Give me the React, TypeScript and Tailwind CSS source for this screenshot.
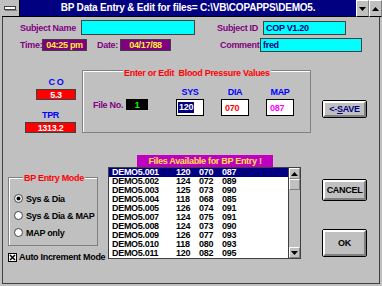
import React from 'react';

const rows = [
  ['DEMO5.001', '120', '070', '087'],
  ['DEMO5.002', '124', '072', '089'],
  ['DEMO5.003', '125', '073', '090'],
  ['DEMO5.004', '118', '068', '085'],
  ['DEMO5.005', '126', '074', '091'],
  ['DEMO5.007', '124', '075', '091'],
  ['DEMO5.008', '124', '073', '090'],
  ['DEMO5.009', '126', '077', '093'],
  ['DEMO5.010', '118', '080', '093'],
  ['DEMO5.011', '120', '082', '095'],
];

const Button = ({ className = '', children }: { className?: string; children?: React.ReactNode }) => (
  <div className={`rounded-[2px] border border-black bg-[#c0c0c0] ${className}`}>
    <div className="flex h-full w-full items-center justify-center border-2 border-t-white border-l-white border-r-[#808080] border-b-[#808080]">
      {children}
    </div>
  </div>
);

const Arrow = ({ up }: { up?: boolean }) => (
  <svg width="7" height="4" viewBox="0 0 7 4">
    <polygon points={up ? '3.5,0 7,4 0,4' : '0,0 7,0 3.5,4'} fill="#000" />
  </svg>
);

const ScrollBtn = ({ up, blank, className = '' }: { up?: boolean; blank?: boolean; className?: string }) => (
  <div className={`flex items-center justify-center border border-t-white border-l-white border-r-[#808080] border-b-[#808080] bg-[#c0c0c0] ${className}`}>
    {!blank && <Arrow up={up} />}
  </div>
);

const Radio = ({ on }: { on?: boolean }) => (
  <svg width="9" height="9" viewBox="0 0 9 9">
    <circle cx="4.5" cy="4.5" r="4" fill="#fff" stroke="#404040" />
    {on && <circle cx="4.5" cy="4.5" r="2" fill="#000" />}
  </svg>
);

const App = () => {
  return (
    <div className="flex h-[286px] w-[382px] flex-col overflow-hidden bg-[#c0c0c0] font-['Liberation_Sans',Arial,sans-serif] text-[9px] font-bold leading-[10px] tracking-[-0.3px]">
      {/* title bar */}
      <div className="flex h-[17px] shrink-0 pl-[2px]">
        <div className="flex h-[17px] w-[18px] items-center justify-center border-r border-b border-black bg-[#c0c0c0]">
          <svg width="13" height="5" viewBox="0 0 13 5">
            <rect x="0.5" y="0.5" width="11" height="3" fill="#fff" stroke="#404040" />
            <line x1="1" y1="4.5" x2="13" y2="4.5" stroke="#808080" />
          </svg>
        </div>
        <div className="flex flex-1 items-center justify-center border-b border-black bg-[#000080] text-[10px] tracking-[-0.2px] text-white">
          {'BP Data Entry & Edit for files= C:\\VB\\COPAPPS\\DEMO5.'}
        </div>
        <ScrollBtn className="h-[17px] w-[13px] border-b-black" />
        <ScrollBtn up className="h-[17px] w-[13px] border-b-black" />
      </div>

      {/* client */}
      <div className="mx-[2px] mb-[2px] flex flex-1 flex-col border-x border-b border-[#404040]">
        <div className="mt-[3px] flex h-[15px] items-center">
          <span className="ml-[17px] w-[61px] whitespace-nowrap text-[#800080]">Subject Name</span>
          <div className="h-[15px] w-[114px] border border-[#404040] bg-[#00ffff]" />
          <span className="ml-[22px] w-[46px] whitespace-nowrap text-[#800080]">Subject ID</span>
          <div className="h-[14px] w-[83px] border border-[#404040] bg-[#00ffff] pl-[2px] leading-[12px] text-[#000080]">COP V1.20</div>
        </div>

        <div className="mt-[3px] flex h-[14px] items-center">
          <span className="ml-[17px] w-[22px] text-[#800080]">Time:</span>
          <div className="flex h-[12px] w-[45px] items-center justify-center border border-[#404040] bg-[#800080] text-[#ffee30]">04:25 pm</div>
          <span className="ml-[10px] w-[23px] text-[#800080]">Date:</span>
          <div className="flex h-[12px] w-[51px] items-center justify-center border border-[#404040] bg-[#800080] text-[#ffee30]">04/17/88</div>
          <span className="ml-[49px] w-[40px] text-[#800080]">Comment</span>
          <div className="h-[14px] w-[102px] border border-[#404040] bg-[#00ffff] pl-[2px] leading-[12px] text-[#000080]">fred</div>
        </div>

        {/* pressure values */}
        <div className="mt-[18px] flex h-[64px] items-start">
          <div className="flex w-[73px] flex-col items-end">
            <div className="mt-[7px] flex flex-col items-center">
              <span className="text-[#0000ff]">C O</span>
              <div className="mt-[2px] flex h-[11px] w-[40px] items-center justify-center border border-[#404040] bg-[#ff0000] text-white">5.3</div>
            </div>
            <div className="mt-[10px] flex flex-col items-center">
              <span className="text-[#0000ff]">TPR</span>
              <div className="mt-[2px] flex h-[11px] w-[51px] items-center justify-center border border-[#404040] bg-[#ff0000] text-white">1313.2</div>
            </div>
          </div>

          <div className="relative ml-[6px] flex h-[63px] w-[229px] items-start border border-[#808080] shadow-[inset_1px_1px_0_#fff] pt-[16px]">
            <span className="absolute top-[-3px] left-[40px] bg-[#c0c0c0] px-[1px] whitespace-nowrap text-[#ff0000]">Enter or Edit&nbsp; Blood Pressure Values</span>
            <div className="mt-[12px] ml-[10px] flex h-[11px] items-center">
              <span className="w-[33px] whitespace-nowrap text-[#800080]">File No.</span>
              <div className="flex h-[11px] w-[22px] items-center justify-center bg-black text-[#00ff00]">1</div>
            </div>
            <div className="ml-[28px] flex flex-col items-center">
              <span className="text-[#0000ff]">SYS</span>
              <div className="mt-[2px] flex h-[17px] w-[28px] items-center border border-black bg-white pl-[1px]">
                <span className="bg-[#000080] px-[1px] leading-[11px] text-white">120</span>
              </div>
            </div>
            <div className="ml-[17px] flex flex-col items-center">
              <span className="text-[#0000ff]">DIA</span>
              <div className="mt-[2px] flex h-[17px] w-[28px] items-center border border-black bg-white pl-[3px] text-[#ff0000]">070</div>
            </div>
            <div className="ml-[17px] flex flex-col items-center">
              <span className="text-[#0000ff]">MAP</span>
              <div className="mt-[2px] flex h-[17px] w-[28px] items-center border border-black bg-white pl-[3px] text-[#ff00ff]">087</div>
            </div>
          </div>

          <Button className="mt-[30px] ml-[11px] h-[18px] w-[45px]">
            <span className="text-[#000080]">
              &lt;-<span className="underline">S</span>AVE
            </span>
          </Button>
        </div>

        {/* bottom section */}
        <div className="mt-[21px] flex items-start">
          <div className="ml-[5px] flex w-[100px] flex-col">
            <div className="relative mt-[22px] flex h-[69px] w-[90px] flex-col border border-[#808080] shadow-[inset_1px_1px_0_#fff] pt-[12px]">
              <span className="absolute top-[-5px] left-[14px] bg-[#c0c0c0] px-[1px] whitespace-nowrap text-[#ff0000]">BP Entry Mode</span>
              {[
                ['Sys & Dia', true],
                ['Sys & Dia & MAP', false],
                ['MAP only', false],
              ].map(([label, on]) => (
                <div key={label as string} className="flex h-[17px] items-center pl-[5px]">
                  <Radio on={on as boolean} />
                  <span className="ml-[3px] whitespace-nowrap text-black">{label as string}</span>
                </div>
              ))}
            </div>
            <div className="mt-[6px] flex h-[10px] items-center">
              <svg width="9" height="9" viewBox="0 0 9 9">
                <rect x="0.5" y="0.5" width="8" height="8" fill="#fff" stroke="#000" />
                <path d="M2 2 L7 7 M7 2 L2 7" stroke="#000" strokeWidth="1.5" />
              </svg>
              <span className="ml-[2px] whitespace-nowrap text-black">Auto Increment Mode</span>
            </div>
          </div>

          <div className="flex flex-col">
            <div className="ml-[29px] flex h-[12px] w-[136px] items-center justify-center bg-[#c000c0] text-[#ffe040]">
              Files Available for BP Entry !
            </div>
            <div className="flex h-[92px] w-[193px] border border-[#404040] bg-white">
              <div className="flex flex-1 flex-col">
                {rows.map((r, i) => (
                  <div
                    key={r[0]}
                    className={`flex h-[9px] items-center leading-[9px] ${i === 0 ? 'bg-[#000080] text-white' : 'text-black'}`}
                  >
                    <span className="w-[67px] pl-[3px]">{r[0]}</span>
                    <span className="w-[23px]">{r[1]}</span>
                    <span className="w-[23px]">{r[2]}</span>
                    <span>{r[3]}</span>
                  </div>
                ))}
              </div>
              <div className="flex w-[12px] flex-col border-l border-[#404040] bg-[#c0c0c0]">
                <ScrollBtn up className="h-[11px] border-b-[#404040]" />
                <ScrollBtn blank className="h-[11px] border-b-[#404040]" />
                <div className="flex-1" />
                <ScrollBtn className="h-[11px]" />
              </div>
            </div>
          </div>

          <div className="ml-[21px] flex flex-col">
            <Button className="mt-[24px] h-[22px] w-[45px]">
              <span className="text-black">CANCEL</span>
            </Button>
            <Button className="mt-[28px] h-[28px] w-[45px]">
              <span className="text-black">OK</span>
            </Button>
          </div>
        </div>
      </div>
    </div>
  );
};

export default App;
